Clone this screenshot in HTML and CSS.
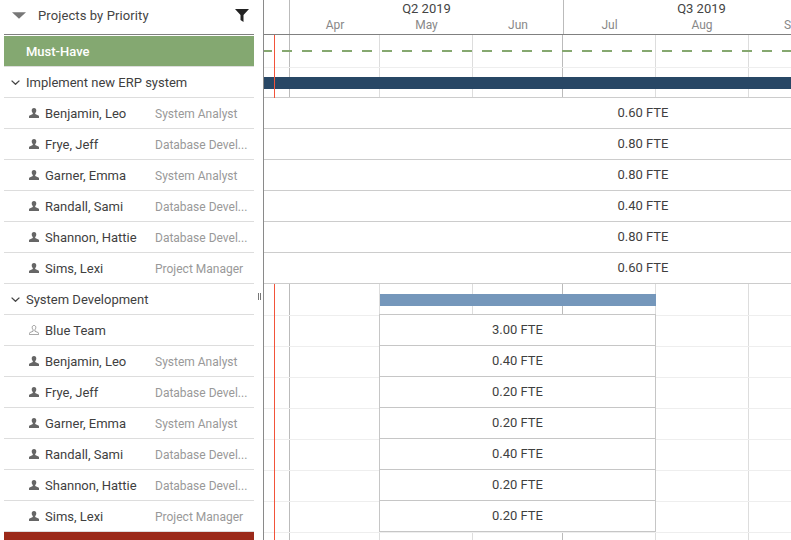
FILE: index.html
```html
<!DOCTYPE html>
<html lang="en">
<head>
<meta charset="utf-8">
<title>Projects by Priority</title>
<link rel="stylesheet" href="styles.css">
</head>
<body>
<svg class="defs" width="0" height="0" aria-hidden="true">
  <symbol id="person" viewBox="0 0 10 10"><path d="M5 0C3.4 0 2.700 1 2.700 2.400c0 1.100.4 2 1.100 2.600v1L.6 7.400C.2 7.600 0 7.900 0 8.300V10h10V8.300c0-.4-.2-.7-.6-.9L6.200 6V5c.7-.6 1.100-1.500 1.100-2.600C7.300 1 6.600 0 5 0z"/></symbol>
  <symbol id="person-o" viewBox="0 0 10 10"><path fill="none" stroke="currentColor" stroke-width=".8" d="M5 .4c-1.200 0-1.800.9-1.800 2.100 0 1 .4 1.800.9 2.300v1.400L1 7.500c-.4.2-.6.4-.6.8v1.300h9.200V8.300c0-.4-.2-.6-.6-.8L5.900 6.200V4.800c.5-.5.9-1.300.9-2.300C6.800 1.300 6.200.4 5 .4z"/></symbol>
  <symbol id="chev" viewBox="0 0 9 5"><path fill="none" stroke="currentColor" stroke-width="1.300" d="M.6.6 4.500 4.300 8.400.6"/></symbol>
</svg>
<main class="app">
  <aside class="side">
    <header class="side-head">
      <svg class="tri" viewBox="0 0 15 7"><path d="M0 0h15L7.500 7z"/></svg>
      <span class="side-title">Projects by Priority</span>
      <svg class="funnel" viewBox="0 0 14 13"><path d="M0 0h14L8.500 6v7L5.500 11V6z"/></svg>
    </header>
    <div class="rows">
      <div class="band band-green">Must-Have</div>
      <div class="row project"><svg class="chev"><use href="#chev"/></svg>Implement new ERP system</div>
      <div class="row person"><svg class="pic"><use href="#person"/></svg><span class="name">Benjamin, Leo</span><span class="role">System Analyst</span></div>
      <div class="row person"><svg class="pic"><use href="#person"/></svg><span class="name">Frye, Jeff</span><span class="role">Database Devel...</span></div>
      <div class="row person"><svg class="pic"><use href="#person"/></svg><span class="name">Garner, Emma</span><span class="role">System Analyst</span></div>
      <div class="row person"><svg class="pic"><use href="#person"/></svg><span class="name">Randall, Sami</span><span class="role">Database Devel...</span></div>
      <div class="row person"><svg class="pic"><use href="#person"/></svg><span class="name">Shannon, Hattie</span><span class="role">Database Devel...</span></div>
      <div class="row person"><svg class="pic"><use href="#person"/></svg><span class="name">Sims, Lexi</span><span class="role">Project Manager</span></div>
      <div class="row project"><svg class="chev"><use href="#chev"/></svg>System Development</div>
      <div class="row person"><svg class="pic pic-team"><use href="#person-o"/></svg><span class="name">Blue Team</span></div>
      <div class="row person"><svg class="pic"><use href="#person"/></svg><span class="name">Benjamin, Leo</span><span class="role">System Analyst</span></div>
      <div class="row person"><svg class="pic"><use href="#person"/></svg><span class="name">Frye, Jeff</span><span class="role">Database Devel...</span></div>
      <div class="row person"><svg class="pic"><use href="#person"/></svg><span class="name">Garner, Emma</span><span class="role">System Analyst</span></div>
      <div class="row person"><svg class="pic"><use href="#person"/></svg><span class="name">Randall, Sami</span><span class="role">Database Devel...</span></div>
      <div class="row person"><svg class="pic"><use href="#person"/></svg><span class="name">Shannon, Hattie</span><span class="role">Database Devel...</span></div>
      <div class="row person"><svg class="pic"><use href="#person"/></svg><span class="name">Sims, Lexi</span><span class="role">Project Manager</span></div>
      <div class="band band-red"></div>
    </div>
    <span class="grip"></span>
  </aside>
  <section class="gantt">
    <header class="time-head">
      <div class="lead"></div>
      <div class="quarter q2">
        <div class="q-label">Q2 2019</div>
        <div class="months"><span class="m-apr">Apr</span><span class="m-may">May</span><span class="m-jun">Jun</span></div>
      </div>
      <div class="quarter q3">
        <div class="q-label">Q3 2019</div>
        <div class="months"><span class="m-jul">Jul</span><span class="m-aug">Aug</span><span class="m-sep">Sep</span></div>
      </div>
    </header>
    <div class="chart chart-top">
      <div class="band-row"><div class="dash"></div></div>
      <div class="summary-row"><div class="bar bar-navy"></div></div>
    </div>
    <div class="alloc-full">
      <div class="fte">0.60 FTE</div>
      <div class="fte">0.80 FTE</div>
      <div class="fte">0.80 FTE</div>
      <div class="fte">0.40 FTE</div>
      <div class="fte">0.80 FTE</div>
      <div class="fte">0.60 FTE</div>
    </div>
    <div class="chart chart-bottom">
      <div class="summary-low"><div class="bar bar-blue"></div></div>
      <div class="alloc-box">
        <div class="cell">3.00 FTE</div>
        <div class="cell">0.40 FTE</div>
        <div class="cell">0.20 FTE</div>
        <div class="cell">0.20 FTE</div>
        <div class="cell">0.40 FTE</div>
        <div class="cell">0.20 FTE</div>
        <div class="cell">0.20 FTE</div>
      </div>
    </div>
    <i class="today today-top"></i>
    <i class="today today-bottom"></i>
  </section>
</main>
</body>
</html>
```

FILE: styles.css
```css
* { box-sizing: border-box; }
html, body { margin: 0; height: 540px; overflow: hidden; background: #fff; }
body { font: 13px/1 Roboto, "Liberation Sans", sans-serif; color: #3f3f3f; }
.defs { position: absolute; }
.app { display: flex; height: 540px; overflow: hidden; }

.side { position: relative; flex: 0 0 263px; padding: 0 9px 0 4px; }
.side-head { display: flex; align-items: center; height: 35px; border-bottom: 1px solid #808080; padding: 0 5px 3px 8px; }
.tri { width: 14px; height: 7px; fill: #777; }
.side-title { margin-left: 12px; flex: 1; font-size: 13px; color: #444; letter-spacing: .1px; }
.funnel { width: 14px; height: 13px; fill: #222; }
.rows { padding-top: 1px; }
.band { color: #fff; }
.band-green { display: flex; align-items: center; height: 31px; padding-left: 22px; font-weight: 500; background: #84a871; border-bottom: 1px solid #ddd; background-clip: padding-box; }
.band-red { height: 10px; background: #9b2a1a; }
.row { display: flex; align-items: center; height: 31px; border-bottom: 1px solid #ddd; white-space: nowrap; }
.project { padding-left: 7px; }
.chev { width: 9px; height: 5px; margin-right: 6px; color: #444; }
.person { padding-left: 25px; }
.pic { width: 10px; height: 10px; fill: #666; margin: -1px 6px 0 0; }
.pic-team { color: #888; }
.name { flex: 0 0 110px; }
.role { flex: 0 0 91px; padding-top: 1px; font-size: 12px; color: #999; }
.grip { position: absolute; left: 258px; top: 293px; width: 3px; height: 7px; border-left: 1px solid #777; border-right: 1px solid #777; }

.gantt { position: relative; flex: 1; min-width: 0; overflow: hidden; border-left: 1px solid #8a8a8a; }
.time-head { display: flex; height: 35px; width: 600px; border-bottom: 1px solid #808080; text-align: center; }
.lead { flex: 0 0 25px; }
.quarter { border-left: 1px solid #bbb; }
.q2 { flex: 0 0 273px; }
.q3 { flex: 0 0 274px; }
.q-label { height: 16px; padding-top: 2px; line-height: 14px; color: #444; }
.months { display: flex; padding-top: 2px; font-size: 12px; line-height: 14px; color: #888; }
.m-apr { flex: 0 0 90px; }
.m-may { flex: 0 0 93px; }
.m-jun { flex: 0 0 90px; }
.m-jul { flex: 0 0 91px; }
.m-aug { flex: 0 0 94px; }
.m-sep { flex: 0 0 90px; }

.chart {
  background-image:
    linear-gradient(#bbb, #bbb), linear-gradient(#bbb, #bbb),
    linear-gradient(#ddd, #ddd), linear-gradient(#ddd, #ddd),
    linear-gradient(#ddd, #ddd), linear-gradient(#ddd, #ddd);
  background-repeat: no-repeat;
  background-size: 1px 100%;
  background-position: 25px 0, 298px 0, 115px 0, 208px 0, 391px 0, 484px 0;
}
.band-row { height: 33px; padding-top: 15px; border-bottom: 1px solid #eee; }
.dash { height: 2px; background: repeating-linear-gradient(90deg, #86a870 0 8px, transparent 8px 18px, #86a870 18px 20px); }
.summary-row { height: 30px; padding-top: 9px; border-bottom: 1px solid #ccc; }
.bar { height: 12px; }
.bar-navy { background: #284765; }
.alloc-full { background: #fff; }
.fte { height: 31px; padding-top: 7px; width: 758px; text-align: center; line-height: 15px; border-bottom: 1px solid #ccc; }
.chart-bottom { position: relative; height: 260px; }
.chart-bottom::before {
  content: ""; position: absolute; inset: 1px 0 0;
  background: repeating-linear-gradient(180deg, transparent 0 30px, #eee 30px 31px);
}
.summary-low { position: relative; height: 30px; padding: 10px 0 0 116px; }
.bar-blue { width: 276px; background: #7597bb; }
.alloc-box { position: relative; width: 277px; margin-left: 115px; border: 1px solid #c6c6c6; border-bottom: 0; background: #fff; }
.cell { height: 31px; padding-top: 7px; text-align: center; line-height: 15px; border-bottom: 1px solid #c6c6c6; }
.today { position: absolute; left: 10px; width: 1px; background: #f2533a; }
.today-top { top: 35px; height: 63px; }
.today-bottom { top: 284px; bottom: 0; }
```
